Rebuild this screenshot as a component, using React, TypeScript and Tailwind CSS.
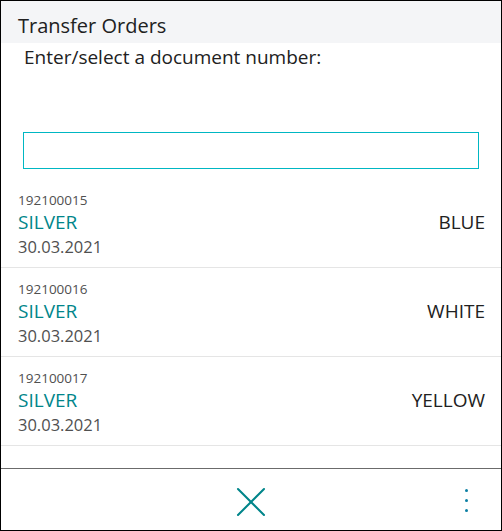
import { X } from "lucide-react";

const orders = [
  { no: "192100015", from: "SILVER", to: "BLUE", date: "30.03.2021" },
  { no: "192100016", from: "SILVER", to: "WHITE", date: "30.03.2021" },
  { no: "192100017", from: "SILVER", to: "YELLOW", date: "30.03.2021" },
];

const App = () => {
  return (
    <div
      className="w-[502px] h-[531px] border border-black bg-white flex flex-col text-[#212121]"
      style={{ fontFamily: "'Segoe UI', 'Open Sans', sans-serif" }}
    >
      <div className="h-[42px] bg-[#f4f5f7] flex items-end pl-[17px] pb-[4px]">
        <h1 className="text-[20px] leading-[26px]">Transfer Orders</h1>
      </div>

      <p className="pl-[23px] text-[19px] leading-[28px]">Enter/select a document number:</p>

      <div className="px-[22px] pt-[61px]">
        <input
          type="text"
          className="w-full h-[37px] border border-[#00b7c3] outline-none px-2"
        />
      </div>

      <ul className="mt-[10px]">
        {orders.map((o) => (
          <li
            key={o.no}
            className="h-[89px] border-b border-[#e5e5e5] pl-[17px] pr-[16px] pt-[11px]"
          >
            <div className="text-[13.5px] leading-[20px] text-[#505050]">{o.no}</div>
            <div className="flex justify-between items-center text-[19px] leading-[25px]">
              <span className="text-[#00858a]">{o.from}</span>
              <span>{o.to}</span>
            </div>
            <div className="text-[16.5px] leading-[23px] text-[#505050]">{o.date}</div>
          </li>
        ))}
      </ul>

      <div className="flex-1" />

      <div className="h-[62px] border-t border-[#6b6b6b] flex items-center relative">
        <button className="mx-auto mt-[4px] text-[#00858a]" aria-label="Close">
          <X size={52} strokeWidth={0.95} />
        </button>
        <button
          className="absolute right-[33px] top-[20px] flex flex-col gap-[7px] items-center"
          aria-label="More"
        >
          <span className="w-[3px] h-[3px] rounded-full bg-[#0b7fa3]" />
          <span className="w-[3px] h-[3px] rounded-full bg-[#0b7fa3]" />
          <span className="w-[3px] h-[3px] rounded-full bg-[#0b7fa3]" />
        </button>
      </div>
    </div>
  );
};

export default App;
